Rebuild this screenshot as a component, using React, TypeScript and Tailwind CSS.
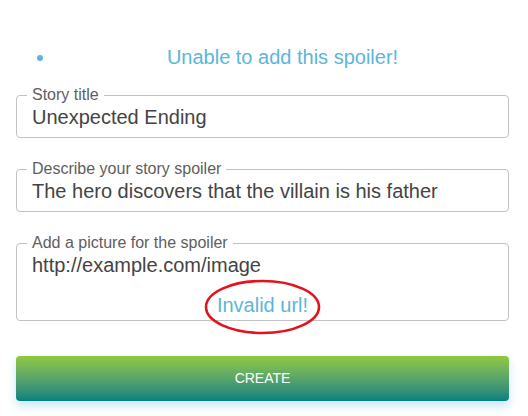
import React from "react";

function Field({
  legend,
  value,
  children,
  className = "",
}: {
  legend: string;
  value: string;
  children?: React.ReactNode;
  className?: string;
}) {
  return (
    <fieldset
      className={`border border-[#c2c2c2] rounded-[4px] px-[10px] ${className}`}
    >
      <legend className="px-[5px] text-[16px] leading-[18px] text-[#5e5e5e]">
        {legend}
      </legend>
      <div className="px-[5px] mt-[2px] text-[20px] leading-[23px] text-[#444444]">
        {value}
      </div>
      {children}
    </fieldset>
  );
}

export default function App() {
  return (
    <div
      className="w-[528px] h-[416px] bg-white overflow-hidden"
      style={{ fontFamily: '"Liberation Sans", Arial, sans-serif' }}
    >
      <div className="ml-4 w-[493px]">
        <ul className="list-disc pl-10 pt-[46px] text-[#5bb6da]">
          <li className="text-center text-[20px] leading-[23px]">
            Unable to add this spoiler!
          </li>
        </ul>

        <Field
          legend="Story title"
          value="Unexpected Ending"
          className="mt-[17px] pb-[8px]"
        />
        <Field
          legend="Describe your story spoiler"
          value="The hero discovers that the villain is his father"
          className="mt-[22px] pb-[8px]"
        />
        <Field
          legend="Add a picture for the spoiler"
          value="http://example.com/image"
          className="mt-[22px] pb-[3px]"
        >
          <div className="mt-[17px] text-center text-[20px] leading-[23px] text-[#5bb6da]">
            <span className="relative inline-block">
              Invalid url!
              <svg
                className="absolute left-[-13px] top-[-15px] pointer-events-none overflow-visible"
                width="117"
                height="56"
                viewBox="0 0 117 56"
              >
                <ellipse
                  cx="58.5"
                  cy="28"
                  rx="56.5"
                  ry="26"
                  fill="none"
                  stroke="#e3121c"
                  strokeWidth="2.6"
                />
              </svg>
            </span>
          </div>
        </Field>

        <button
          className="mt-[35px] w-full h-[45px] rounded-[4px] text-white text-[14px] bg-gradient-to-b from-[#92c83a] to-[#008080] shadow-[0_5px_10px_rgba(40,160,210,0.25)]"
        >
          CREATE
        </button>
      </div>
    </div>
  );
}
